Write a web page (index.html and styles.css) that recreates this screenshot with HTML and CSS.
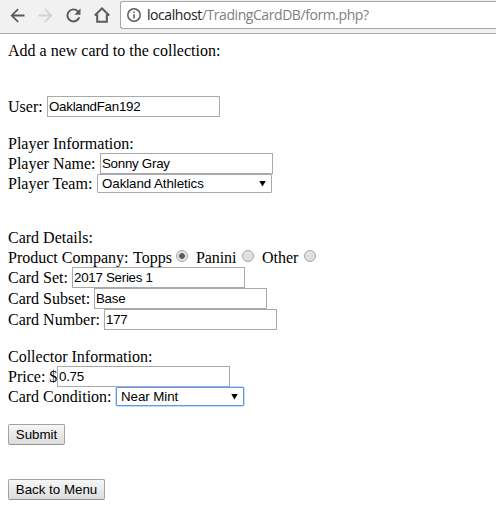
FILE: index.html
```html
<!DOCTYPE html>
<html lang="en">
<head>
<meta charset="utf-8">
<title>Add Card</title>
<link rel="stylesheet" href="styles.css">
</head>
<body>
<header class="toolbar">
  <svg class="nav" viewBox="0 0 24 24"><path d="M20 10.8H7.83l5.59-5.39L12 4l-8 8 8 8 1.41-1.41L7.83 13.2H20z"/></svg>
  <svg class="nav disabled" viewBox="0 0 24 24"><path d="M4 10.8h12.17l-5.59-5.39L12 4l8 8-8 8-1.41-1.41 5.58-5.39H4z"/></svg>
  <svg class="nav" viewBox="0 0 24 24"><path d="M17.65 6.35A8 8 0 1 0 19.73 14h-2.4A5.8 5.8 0 1 1 16.2 7.8L13 11h7V4z"/></svg>
  <svg class="nav home" viewBox="0 0 18 18"><path d="M1.8 9.5 9 2.4l7.2 7.1M4.2 8.5v7.3h9.6V8.5"/></svg>
  <div class="address">
    <svg class="info" viewBox="0 0 14 14"><circle cx="7" cy="7" r="6.2"/><path d="M7 6.2v4.3M7 3.5v1.5"/></svg>
    <span class="url"><span class="host">localhost</span>/TradingCardDB/form.php?</span>
  </div>
</header>
<form class="page">
  <p>Add a new card to the collection:</p>
  <section class="group user">
    <div class="row"><label class="w-user">User:</label><input type="text" value="OaklandFan192"></div>
  </section>
  <section class="group player">
    <p>Player Information:</p>
    <div class="row"><label class="w-name">Player Name:</label><input type="text" value="Sonny Gray"></div>
    <div class="row short"><label class="w-team">Player Team:</label><div class="select team"><span>Oakland Athletics</span><i></i></div></div>
  </section>
  <section class="group details">
    <p>Card Details:</p>
    <div class="row company"><label class="w-company">Product Company:</label><label class="w-topps">Topps</label><input type="radio" name="company" checked><label class="w-panini">Panini</label><input type="radio" name="company"><label class="w-other">Other</label><input type="radio" name="company"></div>
    <div class="row"><label class="w-set">Card Set:</label><input type="text" value="2017 Series 1"></div>
    <div class="row"><label class="w-subset">Card Subset:</label><input type="text" value="Base"></div>
    <div class="row"><label class="w-number">Card Number:</label><input type="text" value="177"></div>
  </section>
  <section class="group collector">
    <p>Collector Information:</p>
    <div class="row"><label class="w-price">Price: $</label><input type="text" value="0.75"></div>
    <div class="row short"><label class="w-condition">Card Condition:</label><div class="select condition"><span>Near Mint</span><i></i></div></div>
  </section>
  <button class="submit" type="button">Submit</button>
  <button class="back" type="button">Back to Menu</button>
</form>
</body>
</html>
```
FILE: styles.css
```css
* { box-sizing: border-box; }
body { margin: 0; background: #fff; color: #000; font: 16px/18px "Liberation Serif", "Times New Roman", serif; overflow: hidden; }
p { margin: 0; height: 18px; }

.toolbar { display: flex; align-items: flex-start; height: 34px; padding-left: 7px; background: #f2f1f2; border-bottom: 1px solid #b0aeb0; }
.nav { flex: none; width: 21px; height: 21px; margin: 5px 7px 0 0; fill: #5a5a5a; }
.nav.disabled { fill: #d2d2d2; }
.nav.home { width: 18px; height: 18px; margin: 6px 9px 0 2px; fill: none; stroke: #5a5a5a; stroke-width: 2; }
.address { flex: 1; display: flex; align-items: center; height: 28px; margin-top: 1px; padding-left: 6px; background: #fff; border: 1px solid #a6a6a6; border-right: 0; border-radius: 3px 0 0 3px; }
.info { width: 14px; height: 14px; margin-right: 6px; fill: none; stroke: #5a5a5a; stroke-width: 1.5; }
.url { color: #808080; font: 14px/20px "Open Sans", sans-serif; white-space: nowrap; letter-spacing: -0.43px; }
.host { color: #222; }

.page { display: flex; flex-direction: column; align-items: flex-start; padding: 8px; }
.user { margin-top: 36px; }
.player { margin-top: 18px; }
.details { margin-top: 36px; }
.collector { margin-top: 18px; }
.row { display: flex; align-items: center; height: 21px; white-space: nowrap; }
.row.short { height: 19px; }
.row.company { height: 20px; padding-top: 2px; }
label { flex: none; }
.w-user { width: 39px; }
.w-name { width: 92px; }
.w-team { width: 89px; }
.w-company { width: 125px; }
.w-topps { width: 42px; }
.w-panini { width: 45px; letter-spacing: -0.1px; }
.w-other { width: 41px; }
.w-set { width: 64px; }
.w-subset { width: 86px; }
.w-number { width: 96px; }
.w-price { width: 49px; }
.w-condition { width: 108px; }

input[type="text"] { appearance: none; width: 173px; height: 21px; margin: 0; padding: 0 1px; border: 1px solid #a9a9a9; border-radius: 0; background: #fff; color: #000; font: 13.333px/17px "Liberation Sans", Arial, sans-serif; letter-spacing: -0.27px; }
input[type="radio"] { appearance: none; flex: none; width: 12px; height: 12px; margin: 0 8px 4px 1px; border: 1px solid #a5a5a5; border-radius: 50%; background: linear-gradient(#e4e4e4, #dcdcdc); }
input[type="radio"]:checked { background: radial-gradient(circle, #5c5c5c 0 2.5px, #e4e4e4 3.3px); }
.select { display: flex; align-items: center; justify-content: space-between; height: 19px; padding: 0 5px 0 4px; border: 1px solid #a9a9a9; border-radius: 1px; font: 13.333px/17px "Liberation Sans", Arial, sans-serif; letter-spacing: -0.07px; }
.select i { width: 7px; height: 6px; background: #000; clip-path: polygon(0 0, 100% 0, 50% 100%); }
.team { width: 175px; }
.condition { width: 128px; border-color: #6594e4; box-shadow: 0 0 0 0.5px #8db4f5; }
button { height: 21px; margin: 0; padding: 0; border: 1px solid #a3a3a3; border-bottom-color: #929292; border-radius: 2px; background: linear-gradient(#f6f6f6, #dcdcdc); color: #000; font: 13.333px/17px "Liberation Sans", Arial, sans-serif; }
.submit { width: 57px; margin-top: 18px; }
.back { width: 97px; margin-top: 34px; }
```
